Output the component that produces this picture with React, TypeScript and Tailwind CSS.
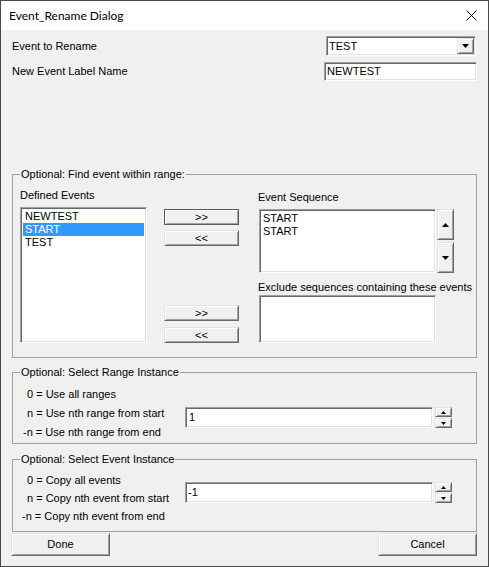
import React from 'react';

const sunken =
  'bg-white border border-t-[#a0a0a0] border-l-[#a0a0a0] border-r-white border-b-white shadow-[inset_1px_1px_0_#696969,inset_-1px_-1px_0_#e3e3e3]';
const raised =
  'bg-[#f0f0f0] border border-t-[#e3e3e3] border-l-[#e3e3e3] border-r-[#696969] border-b-[#696969] shadow-[inset_1px_1px_0_#fff,inset_-1px_-1px_0_#a0a0a0]';
const raisedDefault =
  'bg-[#f0f0f0] border border-[#5a5a5a] shadow-[inset_1px_1px_0_#fff,inset_-1px_-1px_0_#a0a0a0]';

function Arrow({ up = false, w = 7, h = 4 }: { up?: boolean; w?: number; h?: number }) {
  return (
    <svg width={w} height={h} viewBox={`0 0 ${w} ${h}`}>
      <path d={up ? `M0 ${h}H${w}L${w / 2} 0Z` : `M0 0H${w}L${w / 2} ${h}Z`} fill="#000" />
    </svg>
  );
}

function MoveButton({ label, focused = false, className = '' }: { label: string; focused?: boolean; className?: string }) {
  return (
    <button
      className={`flex h-[16px] w-[75px] items-center justify-center leading-none ${
        focused ? raisedDefault : raised
      } ${className}`}
    >
      {label}
    </button>
  );
}

function Spinner() {
  return (
    <div className="ml-[2px] flex w-[17px] flex-col">
      <button className={`flex h-[10px] items-center justify-center ${raised}`}>
        <Arrow up w={5} h={3} />
      </button>
      <button className={`mt-[1px] flex h-[10px] items-center justify-center ${raised}`}>
        <Arrow w={5} h={3} />
      </button>
    </div>
  );
}

function GroupBox({ title, className = '', children }: { title: string; className?: string; children: React.ReactNode }) {
  return (
    <div className={`relative mx-[11px] border border-[#a0a0a0] ${className}`}>
      <span className="absolute left-[7px] top-[-7px] bg-[#f0f0f0] px-[1px] leading-[13px]">{title}</span>
      {children}
    </div>
  );
}

export default function App() {
  return (
    <div className="flex h-[567px] w-[489px] flex-col border border-[#4a4a4a] bg-[#f0f0f0] font-['Liberation_Sans',Arial,sans-serif] text-[11px] text-black">
      {/* Title bar */}
      <div className="flex h-[29px] shrink-0 items-center justify-between bg-white pl-[8px] pr-[11px]">
        <span className="font-['Lato',sans-serif] text-[12px]">Event_Rename Dialog</span>
        <svg width="11" height="11" viewBox="0 0 11 11">
          <path d="M0.5 0.5L10.5 10.5M10.5 0.5L0.5 10.5" stroke="#000" strokeWidth="1" />
        </svg>
      </div>

      <div className="flex flex-1 flex-col">
        {/* Event to rename */}
        <div className="mt-[6px] flex h-[20px] items-center justify-between pl-[11px] pr-[12px]">
          <span>Event to Rename</span>
          <div className={`flex h-[20px] w-[150px] items-center ${sunken}`}>
            <span className="flex-1 pl-[2px]">TEST</span>
            <div className={`mr-[1px] flex h-[16px] w-[17px] items-center justify-center ${raised}`}>
              <Arrow />
            </div>
          </div>
        </div>

        {/* New label */}
        <div className="mt-[6px] flex h-[19px] items-center justify-between pl-[11px] pr-[11px]">
          <span>New Event Label Name</span>
          <div className={`flex h-[19px] w-[153px] items-center pl-[2px] ${sunken}`}>NEWTEST</div>
        </div>

        {/* Find event within range */}
        <GroupBox title="Optional: Find event within range:" className="mt-[93px]">
          <div className="flex pb-[14px] pl-[7px] pt-[14px]">
            <div className="flex w-[127px] flex-col">
              <span className="leading-[13px]">Defined Events</span>
              <div className={`mt-[5px] h-[136px] p-[2px] leading-[13px] ${sunken}`}>
                <div className="pl-[2px]">NEWTEST</div>
                <div className="bg-[#3399ff] pl-[2px] text-white">START</div>
                <div className="pl-[2px]">TEST</div>
              </div>
            </div>

            <div className="ml-[17px] flex w-[75px] flex-col">
              <MoveButton label=">>" focused className="mt-[20px]" />
              <MoveButton label="<<" className="mt-[5px]" />
              <MoveButton label=">>" className="mt-[59px]" />
              <MoveButton label="<<" className="mt-[6px]" />
            </div>

            <div className="ml-[20px] flex flex-col">
              <span className="ml-[-1px] mt-[2px] leading-[13px]">Event Sequence</span>
              <div className="mt-[5px] flex">
                <div className={`h-[64px] w-[177px] p-[2px] pl-[3px] leading-[13px] ${sunken}`}>
                  <div>START</div>
                  <div>START</div>
                </div>
                <div className="ml-[1px] flex w-[17px] flex-col">
                  <button className={`flex h-[31px] items-center justify-center ${raised}`}>
                    <Arrow up />
                  </button>
                  <button className={`mt-[2px] flex h-[31px] items-center justify-center ${raised}`}>
                    <Arrow />
                  </button>
                </div>
              </div>
              <span className="ml-[-1px] mt-[8px] whitespace-nowrap leading-[13px]">
                Exclude sequences containing these events
              </span>
              <div className={`mt-[1px] h-[48px] w-[177px] ${sunken}`} />
            </div>
          </div>
        </GroupBox>

        {/* Range instance */}
        <GroupBox title="Optional: Select Range Instance" className="mt-[14px]">
          <div className="flex pb-[1px]">
            <div className="w-[172px] pt-[12px] leading-[19px]">
              <div className="pl-[14px]">0 = Use all ranges</div>
              <div className="pl-[14px]">n = Use nth range from start</div>
              <div className="pl-[10px]">-n = Use nth range from end</div>
            </div>
            <div className="mt-[34px] flex h-[21px]">
              <div className={`flex h-[21px] w-[248px] items-center pl-[3px] ${sunken}`}>1</div>
              <Spinner />
            </div>
          </div>
        </GroupBox>

        {/* Event instance */}
        <GroupBox title="Optional: Select Event Instance" className="mt-[15px]">
          <div className="flex pb-[6px]">
            <div className="w-[172px] pt-[11px] leading-[18px]">
              <div className="pl-[14px]">0 = Copy all events</div>
              <div className="pl-[14px]">n = Copy nth event from start</div>
              <div className="pl-[9px]">-n = Copy nth event from end</div>
            </div>
            <div className="mt-[22px] flex h-[21px]">
              <div className={`flex h-[21px] w-[248px] items-center pl-[2px] ${sunken}`}>-1</div>
              <Spinner />
            </div>
          </div>
        </GroupBox>

        {/* Footer buttons */}
        <div className="mt-[1px] flex justify-between pl-[10px] pr-[11px]">
          <button className={`h-[23px] w-[99px] ${raised}`}>Done</button>
          <button className={`h-[23px] w-[99px] ${raised}`}>Cancel</button>
        </div>
      </div>
    </div>
  );
}
